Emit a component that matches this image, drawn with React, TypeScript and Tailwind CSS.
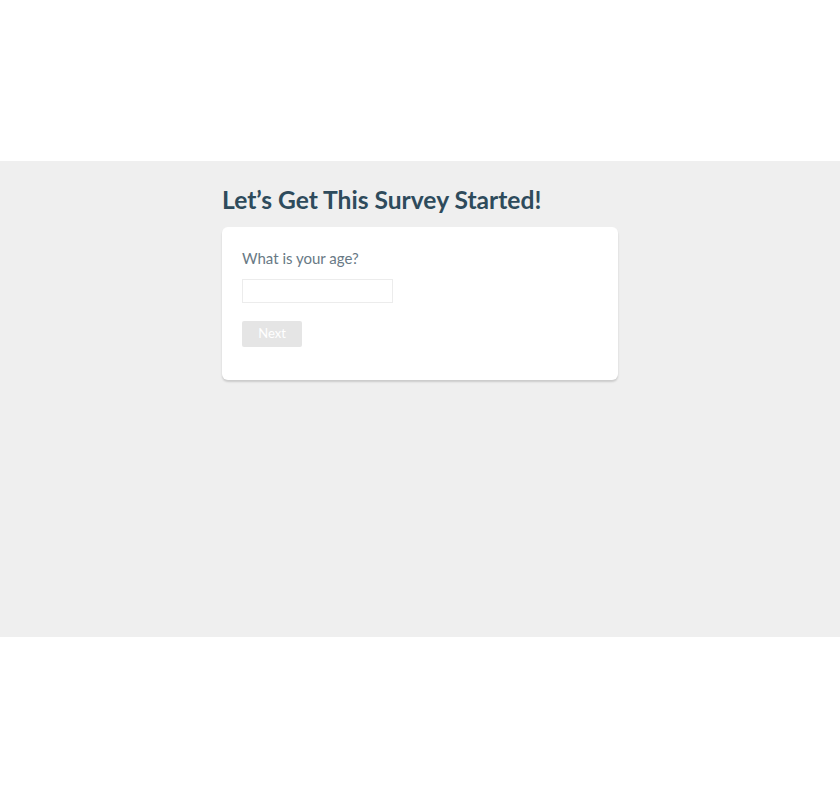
export default function App() {
  return (
    <div className="min-h-screen bg-white font-['Lato','Noto_Sans',sans-serif]">
      <div className="h-[161px]" />

      <div className="h-[476px] bg-[#efefef] pt-[21px]">
        <div className="mx-auto w-[396px]">
          <h1 className="text-[24.6px] font-bold leading-[36px] text-[#2e4b5c]">
            Let’s Get This Survey Started!
          </h1>

          <div className="mt-[9px] rounded-[6px] bg-white px-5 pt-[20px] pb-[33px] shadow-[0_2px_2px_rgba(0,0,0,0.15)]">
            <label className="block text-[15px] font-normal leading-[22px] text-[#687985]">
              What is your age?
            </label>

            <input
              type="text"
              className="mt-[10px] block h-[24px] w-[151px] border border-[#ececec] bg-white outline-none"
            />

            <button
              disabled
              className="mt-[18px] block h-[26px] w-[60px] rounded-[2px] bg-[#e5e5e5] text-[13px] text-white"
            >
              Next
            </button>
          </div>
        </div>
      </div>
    </div>
  );
}
